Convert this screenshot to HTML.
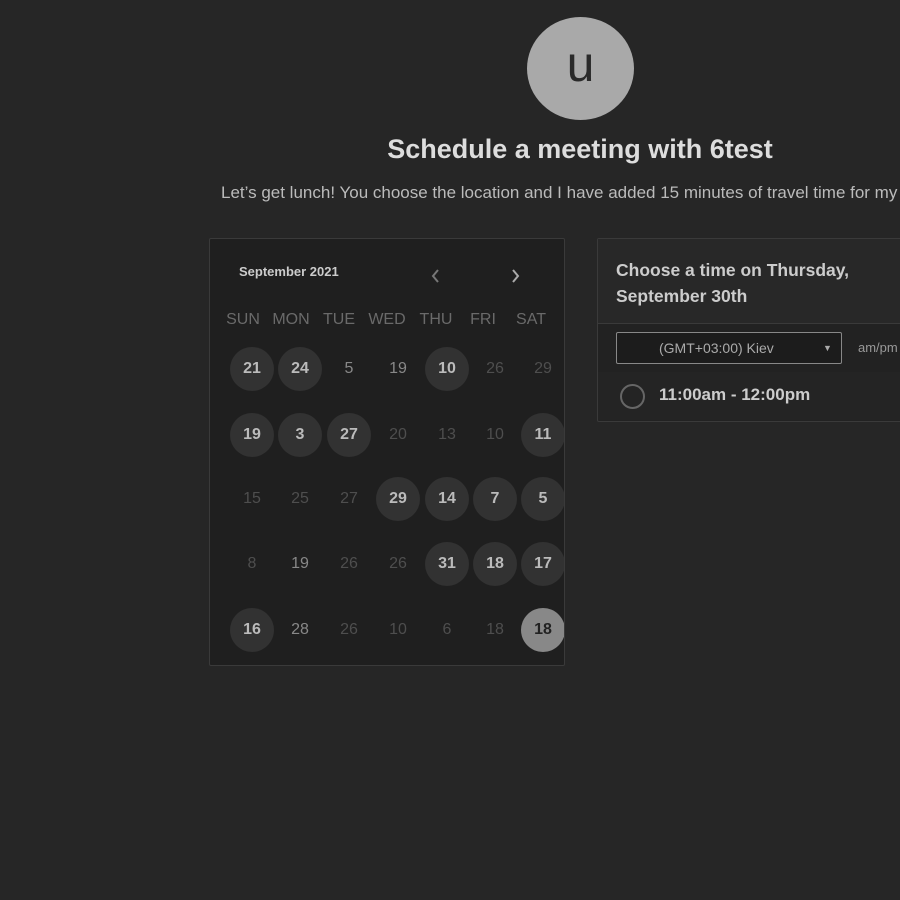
<!DOCTYPE html>
<html><head><style>
body{margin:0;width:900px;height:900px;background:#262626;overflow:hidden;font-family:"Liberation Sans",sans-serif;position:relative}
.a{position:absolute}
.av{left:527px;top:17px;width:107px;height:103px;border-radius:50%;background:#a9a9a9;color:#2a2a2a;font-size:50px;text-align:center;line-height:94px}
.cal{left:209px;top:238px;width:354px;height:426px;background:#1f1f1f;border:1px solid #3a3a3a;border-radius:2px;overflow:hidden}
.d{position:absolute;width:44px;height:44px;margin:-22px 0 0 -22px;border-radius:50%;text-align:center;line-height:44px;font-size:16px}
.c{background:#323232;color:#bbb;font-weight:bold}
.p{color:#888}
.m{color:#4e4e4e}
.s{background:#888;color:#222;font-weight:bold}
.wd{position:absolute;top:72px;color:#6a6a6a;font-size:16px;width:50px;margin-left:-25px;text-align:center}
</style></head><body>
<div class="a av">u</div>
<div class="a" style="left:0;width:1160px;top:134px;text-align:center;color:#ddd;font-size:27px;font-weight:bold">Schedule a meeting with 6test</div>
<div class="a" style="left:221px;top:183px;color:#bbb;font-size:17px;white-space:nowrap">Let’s get lunch! You choose the location and I have added 15 minutes of travel time for my</div>
<div class="a cal">
<div class="a" style="left:29px;top:25px;color:#ccc;font-size:13px;font-weight:bold">September 2021</div>
<svg class="a" style="left:220px;top:29px" width="12" height="16"><path d="M8 2L3 8l5 6" fill="none" stroke="#777" stroke-width="2"/></svg>
<svg class="a" style="left:300px;top:29px" width="12" height="16"><path d="M3 2l5 6-5 6" fill="none" stroke="#aaa" stroke-width="2"/></svg>
<div class="wd" style="left:33px">SUN</div><div class="wd" style="left:81px">MON</div><div class="wd" style="left:129px">TUE</div><div class="wd" style="left:177px">WED</div><div class="wd" style="left:226px">THU</div><div class="wd" style="left:273px">FRI</div><div class="wd" style="left:321px">SAT</div>
<div id="g"></div>
</div>
<div class="a" style="left:597px;top:238px;width:320px;height:182px;background:#222;border:1px solid #3a3a3a;border-radius:2px">
<div class="a" style="left:0;top:0;width:320px;height:84px;background:#282828;border-bottom:1px solid #3a3a3a"></div>
<div class="a" style="left:18px;top:18px;color:#ccc;font-size:17.5px;font-weight:bold;line-height:26px">Choose a time on Thursday,<br>September 30th</div>
<div class="a" style="left:18px;top:93px;width:224px;height:30px;border:1px solid #888;border-radius:2px;background:#1c1c1c;color:#aaa;font-size:14px;line-height:30px"><span style="margin-left:42px">(GMT+03:00) Kiev</span><span class="a" style="left:206px;top:0;font-size:9px">▼</span></div>
<div class="a" style="left:260px;top:101px;color:#999;font-size:13px">am/pm</div>
<div class="a" style="left:0;top:133px;width:320px;height:48px;background:#242424"></div>
<div class="a" style="left:22px;top:145px;width:21px;height:21px;border:2px solid #666;border-radius:50%"></div>
<div class="a" style="left:61px;top:146px;color:#ccc;font-size:17px;font-weight:bold">11:00am - 12:00pm</div>
</div>
<script>
var xs=[42,90,139,188,237,285,333],ys=[130,196,260,325,391];
var rows=[["21c","24c","5p","19p","10c","26m","29m"],["19c","3c","27c","20m","13m","10m","11c"],["15m","25m","27m","29c","14c","7c","5c"],["8m","19p","26m","26m","31c","18c","17c"],["16c","28p","26m","10m","6m","18m","18s"]];
var h="";rows.forEach(function(r,i){r.forEach(function(v,j){h+='<div class="d '+v.slice(-1)+'" style="left:'+xs[j]+'px;top:'+ys[i]+'px">'+v.slice(0,-1)+'</div>';});});
document.getElementById("g").innerHTML=h;
</script>
</body></html>
